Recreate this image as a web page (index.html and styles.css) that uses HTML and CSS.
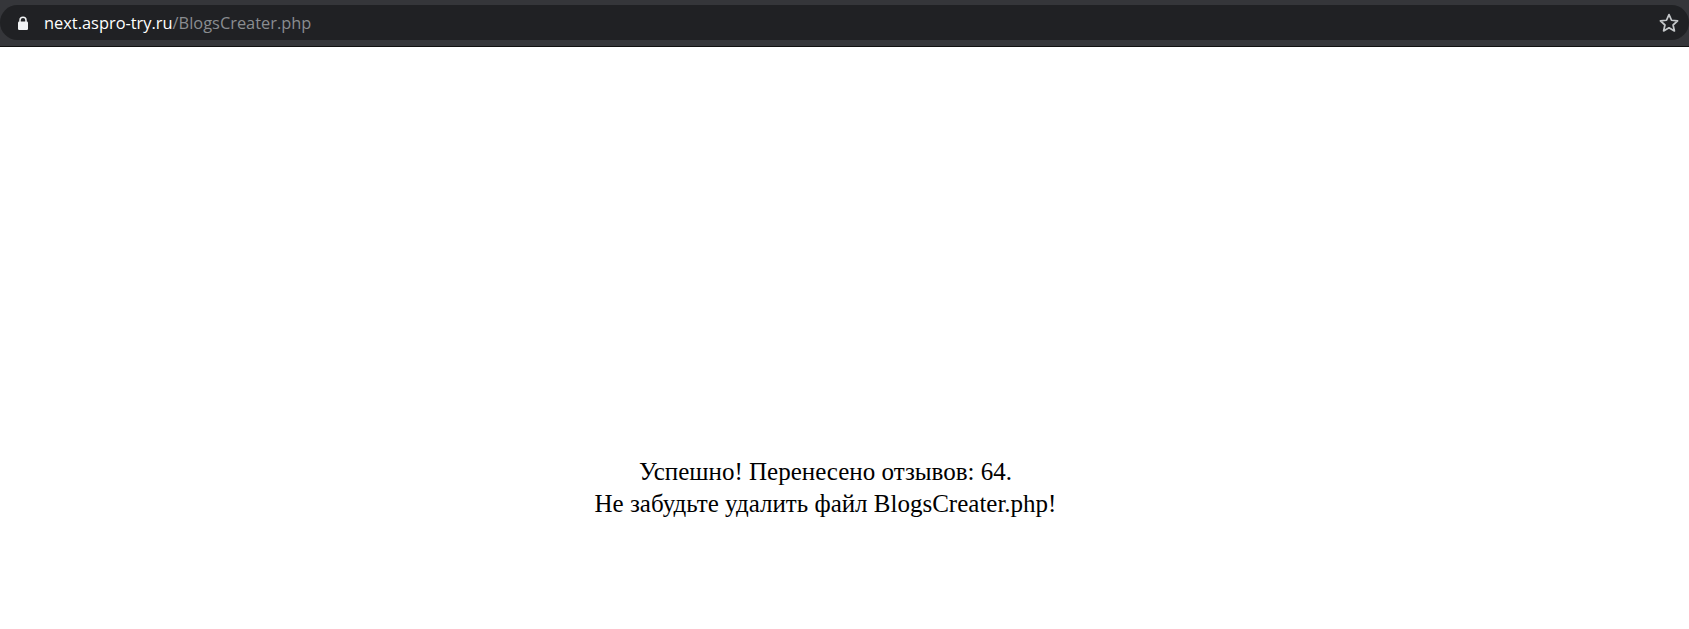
FILE: index.html
```html
<!DOCTYPE html>
<html lang="ru">
<head>
    <meta charset="UTF-8">
    <title>BlogsCreater.php</title>
    <link rel="stylesheet" href="styles.css">
</head>
<body>

<div class="toolbar">
    <div class="omnibox">
        <svg class="lock" viewBox="0 0 12 14" width="12" height="14">
            <path d="M3 6V4.2a3 3 0 0 1 6 0V6" fill="none" stroke="#f1f3f4" stroke-width="1.5"/>
            <rect x="1" y="5.5" width="10" height="8.5" rx="1.2" fill="#f1f3f4"/>
        </svg>
        <div class="url"><span class="host">next.aspro-try.ru</span>/BlogsCreater.php</div>
        <svg class="star" viewBox="0 0 20 20" width="22" height="22">
            <path d="M10 2.4l2.3 5.1 5.5.6-4.1 3.7 1.2 5.4L10 14.4l-4.9 2.8 1.2-5.4-4.1-3.7 5.5-.6z" fill="none" stroke="#c4c7c9" stroke-width="1.6" stroke-linejoin="round"/>
        </svg>
    </div>
</div>

<div class="message">
    Успешно! Перенесено отзывов: 64.<br>
    Не забудьте удалить файл BlogsCreater.php!
</div>

</body>
</html>
```

FILE: styles.css
```css
body {
    margin: 0;
    background: #fff;
    font-family: "Liberation Serif", serif;
}
.toolbar {
    height: 40px;
    padding: 5px 0 1px;
    background: #35363a;
    border-bottom: 1px solid #111;
    box-sizing: content-box;
}
.omnibox {
    height: 35px;
    display: flex;
    align-items: center;
    background: #202124;
    border-radius: 18px;
    padding: 0 9px 0 17px;
}
.lock {
    margin-right: 15px;
}
.url {
    flex: 1;
    font-family: "Open Sans", sans-serif;
    font-size: 16.4px;
    color: #8a8d91;
}
.host {
    color: #fff;
}
.message {
    margin-top: 409px;
    padding-right: 38px;
    text-align: center;
    font-size: 25px;
    line-height: 32px;
    color: #000;
}
```
